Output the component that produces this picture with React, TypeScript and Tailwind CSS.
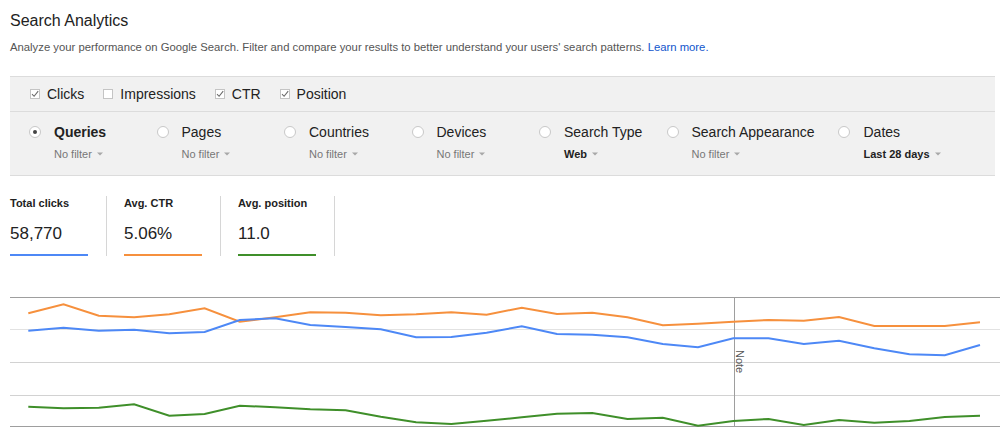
import React from "react";

const metrics = [
  { label: "Clicks", checked: true },
  { label: "Impressions", checked: false },
  { label: "CTR", checked: true },
  { label: "Position", checked: true },
];

const dimensions = [
  { label: "Queries", filter: "No filter", active: true, strong: false },
  { label: "Pages", filter: "No filter", active: false, strong: false },
  { label: "Countries", filter: "No filter", active: false, strong: false },
  { label: "Devices", filter: "No filter", active: false, strong: false },
  { label: "Search Type", filter: "Web", active: false, strong: true },
  { label: "Search Appearance", filter: "No filter", active: false, strong: false },
  { label: "Dates", filter: "Last 28 days", active: false, strong: true },
];

const totals = [
  { label: "Total clicks", value: "58,770", bar: "bg-[#4d88f6]" },
  { label: "Avg. CTR", value: "5.06%", bar: "bg-[#f6903d]" },
  { label: "Avg. position", value: "11.0", bar: "bg-[#3f8f2a]" },
];

// daily series, already in chart pixel space (y from page top)
const ctr = [
  313.3, 304.3, 315.7, 317.3, 314.3, 308.3, 321.7, 317.3, 312.3, 312.7, 315.3, 314.3, 312.3, 314.7,
  307.7, 314, 312.7, 317.3, 325.3, 323.7, 321.7, 320, 320.7, 317, 326, 326, 326, 322.3,
];
const clicks = [
  330.7, 327.7, 330.7, 329.7, 333.3, 332, 320, 318.3, 325, 327, 329.3, 337.3, 337, 332.7,
  326.3, 334, 334.7, 337.3, 344, 347.3, 338.3, 338.3, 344, 340.7, 348.3, 354.3, 355.3, 345,
];
const position = [
  406.7, 408.3, 407.7, 404.3, 415.7, 414, 405.7, 407.3, 409.3, 410.3, 416.7, 422.3, 424, 420.7,
  417.3, 413.7, 413, 419, 417.7, 425.7, 421, 419, 425, 420, 422.7, 421, 417, 415.7,
];

const toPoints = (ys: number[]) =>
  ys.map((y, i) => `${(28.3 + i * 35.25).toFixed(1)},${y}`).join(" ");

function Checkbox({ checked }: { checked: boolean }) {
  return (
    <span className="flex h-[10px] w-[10px] items-center justify-center border border-[#c4c4c4] bg-white">
      {checked && (
        <svg width="8" height="8" viewBox="0 0 8 8">
          <path d="M1 4.2 L3.1 6.3 L7.2 1.2" fill="none" stroke="#6b6b6b" strokeWidth="1.1" />
        </svg>
      )}
    </span>
  );
}

function Radio({ active }: { active: boolean }) {
  return (
    <span className="mt-[2px] flex h-[12px] w-[12px] shrink-0 items-center justify-center rounded-full border border-[#c8c8c8] bg-white">
      {active && <span className="h-[4px] w-[4px] rounded-full bg-[#444]" />}
    </span>
  );
}

function Caret() {
  return (
    <svg width="6" height="4" viewBox="0 0 6 4" className="ml-[5px]">
      <path d="M0 0.5 L6 0.5 L3 3.5 Z" fill="#a8a8a8" />
    </svg>
  );
}

export default function App() {
  return (
    <div className="h-[435px] w-[1000px] overflow-hidden bg-white font-['Liberation_Sans',Arial,sans-serif] text-[#222]">
      <div className="px-[10px] pt-[11px]">
        <h1 className="text-[16px] leading-[20px]">Search Analytics</h1>
        <p className="mt-[9px] text-[11.3px] leading-[14px] text-[#555]">
          Analyze your performance on Google Search. Filter and compare your results to better
          understand your users' search patterns.{" "}
          <a className="text-[#1155cc]">Learn more.</a>
        </p>
      </div>

      <div className="ml-[10px] mt-[22px] w-[985px] border-y border-[#dcdcdc] bg-[#f1f1f1]">
        <div className="flex h-[34px] items-center gap-[19px] pl-[20px]">
          {metrics.map((m) => (
            <label key={m.label} className="flex items-center gap-[7px] text-[14px] leading-[16px]">
              <Checkbox checked={m.checked} />
              {m.label}
            </label>
          ))}
        </div>
        <div className="flex border-t border-[#dcdcdc] pb-[14px] pl-[19px] pt-[12px]">
          {dimensions.map((d) => (
            <div key={d.label} className="flex min-w-[127.5px] pr-[24px]">
              <Radio active={d.active} />
              <div className="ml-[13px]">
                <div className={`whitespace-nowrap text-[14px] leading-[16px] ${d.active ? "font-bold" : ""}`}>
                  {d.label}
                </div>
                <div
                  className={`mt-[7px] flex items-center whitespace-nowrap text-[11px] leading-[14px] ${
                    d.strong ? "font-bold text-[#222]" : "text-[#777]"
                  }`}
                >
                  {d.filter}
                  <Caret />
                </div>
              </div>
            </div>
          ))}
        </div>
      </div>

      <div className="ml-[10px] mt-[20px] flex">
        {totals.map((t, i) => (
          <div
            key={t.label}
            className={`border-r border-[#d6d6d6] pr-[18px] ${i === 0 ? "" : "pl-[17px]"}`}
          >
            <div className="w-[78px]">
              <div className="whitespace-nowrap text-[11px] font-bold leading-[14px]">{t.label}</div>
              <div className="mt-[14px] text-[17px] leading-[20px]">{t.value}</div>
              <div className={`mt-[10px] h-[2px] ${t.bar}`} />
            </div>
          </div>
        ))}
      </div>

      <svg width="1000" height="145" viewBox="0 290 1000 145" className="mt-[34px] block">
        <line x1="10" x2="1000" y1="329.5" y2="329.5" stroke="#e2e2e2" />
        <line x1="10" x2="1000" y1="362.5" y2="362.5" stroke="#d2d2d2" />
        <line x1="10" x2="1000" y1="395.5" y2="395.5" stroke="#d2d2d2" />
        <line x1="10" x2="1000" y1="297.5" y2="297.5" stroke="#9e9e9e" />
        <line x1="10" x2="1000" y1="426.5" y2="426.5" stroke="#9e9e9e" />
        <line x1="734.5" x2="734.5" y1="297" y2="427" stroke="#9e9e9e" />
        <text
          transform="translate(736,350) rotate(90)"
          fontSize="11"
          fill="#555"
          fontFamily="Liberation Sans, Arial, sans-serif"
        >
          Note
        </text>
        <polyline points={toPoints(ctr)} fill="none" stroke="#f6903d" strokeWidth="2" />
        <polyline points={toPoints(clicks)} fill="none" stroke="#4d88f6" strokeWidth="2" />
        <polyline points={toPoints(position)} fill="none" stroke="#3f8f2a" strokeWidth="2" />
      </svg>
    </div>
  );
}
